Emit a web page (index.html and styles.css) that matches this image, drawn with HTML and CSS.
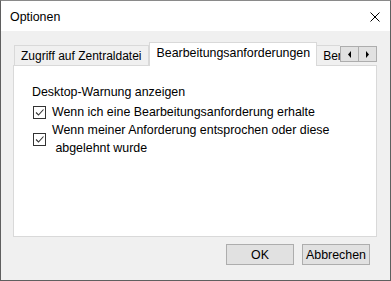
FILE: index.html
```html
<!DOCTYPE html>
<html lang="de">
<head>
    <meta charset="UTF-8">
    <title>Optionen</title>
    <link rel="stylesheet" href="styles.css">
</head>
<body>
    <div class="window">
        <div class="titlebar">
            <span class="title">Optionen</span>
            <svg class="close" width="10" height="10" viewBox="0 0 10 10">
                <path d="M0.5 0.5 L9.5 9.5 M9.5 0.5 L0.5 9.5" stroke="#000" stroke-width="1" fill="none"/>
            </svg>
        </div>

        <div class="content">
            <div class="tabstrip">
                <div class="tablist">
                    <div class="tab">Zugriff auf Zentraldatei</div>
                    <div class="tab active">Bearbeitungsanforderungen</div>
                    <div class="tab">Benachrichtigungen</div>
                </div>
                <div class="tabscroll">
                    <div class="scrollbtn">
                        <svg width="4" height="7" viewBox="0 0 4 7"><path d="M3 0 L3 7 L0 3.5 Z" fill="#000"/></svg>
                    </div>
                    <div class="scrollbtn">
                        <svg width="4" height="7" viewBox="0 0 4 7"><path d="M0 0 L0 7 L3 3.5 Z" fill="#000"/></svg>
                    </div>
                </div>
            </div>

            <div class="panel">
                <div class="group-label">Desktop-Warnung anzeigen</div>
                <label class="check">
                    <span class="box"><svg width="11" height="11" viewBox="0 0 11 11"><path d="M2 5.5 L4.5 8 L9.5 2.5" stroke="#333" stroke-width="1.1" fill="none"/></svg></span>
                    <span>Wenn ich eine Bearbeitungsanforderung erhalte</span>
                </label>
                <label class="check">
                    <span class="box"><svg width="11" height="11" viewBox="0 0 11 11"><path d="M2 5.5 L4.5 8 L9.5 2.5" stroke="#333" stroke-width="1.1" fill="none"/></svg></span>
                    <span>Wenn meiner Anforderung entsprochen oder diese<br>&nbsp;abgelehnt wurde</span>
                </label>
            </div>
        </div>

        <div class="buttons">
            <button>OK</button>
            <button>Abbrechen</button>
        </div>
    </div>
</body>
</html>
```

FILE: styles.css
```css
body {
    margin: 0;
    font-family: "Liberation Sans", Arial, sans-serif;
    font-size: 12px;
    color: #000;
}
.window {
    width: 391px;
    height: 281px;
    box-sizing: border-box;
    border: 1px solid #5f5f5f;
    border-top-color: #8a8a8a;
    background-color: #f0f0f0;
    display: flex;
    flex-direction: column;
}
.titlebar {
    height: 30px;
    background-color: #fff;
    display: flex;
    align-items: center;
    justify-content: space-between;
    padding: 1px 10px 0 9px;
    box-sizing: border-box;
    font-size: 12.4px;
}
.close {
    display: block;
}
.content {
    padding: 11px 13px 0 12px;
}
.tabstrip {
    display: flex;
    align-items: flex-end;
    height: 23px;
}
.tablist {
    display: flex;
    align-items: flex-end;
    overflow: hidden;
    flex: 1;
    height: 24px;
    margin-bottom: -1px;
    padding-left: 1px;
}
.tab {
    height: 19px;
    line-height: 20px;
    padding: 0 6px;
    background-color: #f0f0f0;
    border: 1px solid #d9d9d9;
    border-bottom: none;
    white-space: nowrap;
    flex-shrink: 0;
    margin-bottom: 1px;
}
.tab + .tab {
    border-left: none;
}
.tab.active {
    height: 23px;
    line-height: 21px;
    padding: 0 6px 0 7px;
    font-size: 12.4px;
    background-color: #fff;
    border-left: 1px solid #d9d9d9;
    margin-bottom: 0;
    position: relative;
    z-index: 1;
}
.tabscroll {
    display: flex;
    margin-bottom: 3px;
}
.scrollbtn {
    width: 17px;
    height: 14px;
    border: 1px solid #adadad;
    background-color: #e1e1e1;
    display: flex;
    align-items: center;
    justify-content: center;
}
.scrollbtn + .scrollbtn {
    border-left: none;
}
.panel {
    height: 172px;
    background-color: #fff;
    border: 1px solid #d9d9d9;
    padding: 17px 0 0 18px;
    box-sizing: border-box;
    font-size: 12.4px;
    line-height: 18px;
}
.group-label {
    margin-bottom: 2px;
}
.check {
    display: flex;
    align-items: center;
    gap: 6px;
}
.box {
    width: 11px;
    height: 11px;
    border: 1px solid #333;
    background-color: #fff;
    margin-left: 1px;
    display: flex;
    flex-shrink: 0;
}
.buttons {
    display: flex;
    justify-content: flex-end;
    gap: 8px;
    padding: 7px 20px 0 0;
}
button {
    width: 68px;
    height: 21px;
    background-color: #e1e1e1;
    border: 1px solid #adadad;
    font-family: "Liberation Sans", Arial, sans-serif;
    font-size: 12.4px;
    padding: 0;
}
```
